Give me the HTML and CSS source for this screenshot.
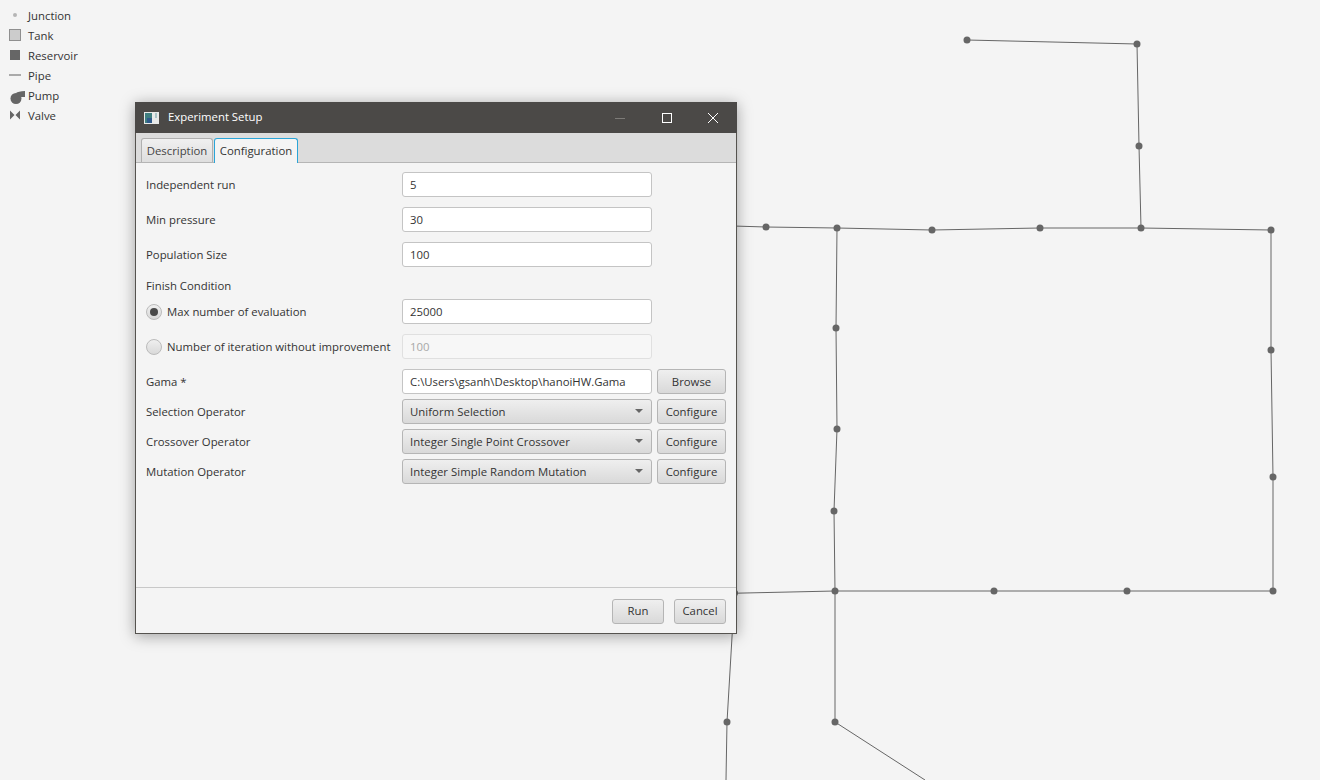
FILE: index.html
```html
<!DOCTYPE html>
<html lang="en">
<head>
    <meta charset="UTF-8">
    <title>Experiment Setup</title>
    <link rel="stylesheet" href="styles.css">
</head>
<body>
    <!-- Network canvas -->
    <svg class="network" width="1320" height="780" viewBox="0 0 1320 780">
        <g fill="none" stroke="#666" stroke-width="1">
            <polyline points="967,40 1137,44 1139,146 1141,228"/>
            <polyline points="700,225 766,227 837,228 932,230 1040,228 1141,228 1271,230 1271,350 1273,477 1273,591 1127,591 994,591 835,591 700,594"/>
            <polyline points="837,228 836,328 837,429 834,511 835,591 835,722 925,780"/>
            <polyline points="733,620 727,722 726,780"/>
        </g>
        <g fill="#666">
            <circle cx="967" cy="40" r="3.5"/>
            <circle cx="1137" cy="44" r="3.5"/>
            <circle cx="1139" cy="146" r="3.5"/>
            <circle cx="766" cy="227" r="3.5"/>
            <circle cx="837" cy="228" r="3.5"/>
            <circle cx="932" cy="230" r="3.5"/>
            <circle cx="1040" cy="228" r="3.5"/>
            <circle cx="1141" cy="228" r="3.5"/>
            <circle cx="1271" cy="230" r="3.5"/>
            <circle cx="836" cy="328" r="3.5"/>
            <circle cx="1271" cy="350" r="3.5"/>
            <circle cx="837" cy="429" r="3.5"/>
            <circle cx="1273" cy="477" r="3.5"/>
            <circle cx="834" cy="511" r="3.5"/>
            <circle cx="835" cy="591" r="3.5"/>
            <circle cx="994" cy="591" r="3.5"/>
            <circle cx="1127" cy="591" r="3.5"/>
            <circle cx="1273" cy="591" r="3.5"/>
            <circle cx="734.500" cy="593" r="3.5"/>
            <circle cx="727" cy="722" r="3.5"/>
            <circle cx="835" cy="722" r="3.5"/>
        </g>
    </svg>

    <!-- Legend -->
    <ul class="legend">
        <li><span class="legend-icon"><span class="icon-junction"></span></span>Junction</li>
        <li><span class="legend-icon"><span class="icon-tank"></span></span>Tank</li>
        <li><span class="legend-icon"><span class="icon-reservoir"></span></span>Reservoir</li>
        <li><span class="legend-icon"><span class="icon-pipe"></span></span>Pipe</li>
        <li>
            <span class="legend-icon">
                <svg class="icon-pump" width="16" height="16" viewBox="0 0 16 16"><circle cx="6" cy="9.500" r="5.500" fill="#666"/><path d="M6 4 Q8 2.500 15 2 V8 H9 Z" fill="#666"/></svg>
            </span>Pump
        </li>
        <li>
            <span class="legend-icon">
                <svg width="12" height="10" viewBox="0 0 12 10"><path d="M1 0.500 L5.500 5 L1 9.500 Z M11 0.500 L6.500 5 L11 9.500 Z" fill="#666"/></svg>
            </span>Valve
        </li>
    </ul>

    <!-- Dialog window -->
    <div class="window">
        <div class="titlebar">
            <svg class="app-icon" width="15" height="12" viewBox="0 0 15 12">
                <rect width="15" height="12" fill="#e8eaea"/>
                <rect x="1" y="1" width="7" height="10" fill="#3f7f80"/>
                <rect x="3" y="6" width="5" height="5" fill="#2f5a8c"/>
                <rect x="11" y="1" width="2" height="5" fill="#a9c4c8"/>
            </svg>
            <span class="window-title">Experiment Setup</span>
            <div class="window-controls">
                <svg width="46" height="30" viewBox="0 0 46 30"><line x1="17" y1="15.500" x2="27" y2="15.500" stroke="#7d7b78"/></svg>
                <svg width="46" height="30" viewBox="0 0 46 30"><rect x="18.500" y="10.500" width="9" height="9" fill="none" stroke="#fff"/></svg>
                <svg width="46" height="30" viewBox="0 0 46 30"><path d="M18 10 L28 20 M28 10 L18 20" stroke="#fff" fill="none"/></svg>
            </div>
        </div>

        <div class="tab-bar">
            <div class="tab">Description</div>
            <div class="tab tab-active">Configuration</div>
        </div>

        <div class="content">
            <form class="form">
                <div class="row">
                    <label>Independent run</label>
                    <input class="field" type="text" value="5">
                </div>
                <div class="row">
                    <label>Min pressure</label>
                    <input class="field" type="text" value="30">
                </div>
                <div class="row">
                    <label>Population Size</label>
                    <input class="field" type="text" value="100">
                </div>
                <div class="section-label">Finish Condition</div>
                <div class="row">
                    <label class="radio-label"><span class="radio radio-on"></span>Max number of evaluation</label>
                    <input class="field" type="text" value="25000">
                </div>
                <div class="row">
                    <label class="radio-label"><span class="radio"></span>Number of iteration without improvement</label>
                    <input class="field field-disabled" type="text" value="100" disabled>
                </div>
                <div class="row row-tight">
                    <label>Gama *</label>
                    <input class="field" type="text" value="C:\Users\gsanh\Desktop\hanoiHW.Gama">
                    <button class="btn" type="button">Browse</button>
                </div>
                <div class="row row-tight">
                    <label>Selection Operator</label>
                    <div class="combo">Uniform Selection<span class="arrow"></span></div>
                    <button class="btn" type="button">Configure</button>
                </div>
                <div class="row row-tight">
                    <label>Crossover Operator</label>
                    <div class="combo">Integer Single Point Crossover<span class="arrow"></span></div>
                    <button class="btn" type="button">Configure</button>
                </div>
                <div class="row row-tight">
                    <label>Mutation Operator</label>
                    <div class="combo">Integer Simple Random Mutation<span class="arrow"></span></div>
                    <button class="btn" type="button">Configure</button>
                </div>
            </form>
        </div>

        <div class="footer">
            <button class="btn btn-footer" type="button">Run</button>
            <button class="btn btn-footer" type="button">Cancel</button>
        </div>
    </div>
</body>
</html>
```

FILE: styles.css
```css
/* Global Styling */
body {
    margin: 0;
    width: 1320px;
    height: 780px;
    overflow: hidden;
    position: relative;
    background-color: #f4f4f4;
    color: #333;
    font-family: "Open Sans", "Noto Sans", sans-serif;
    font-size: 11.35px;
}

.network {
    position: absolute;
    left: 0;
    top: 0;
}

/* Legend */
.legend {
    list-style: none;
    margin: 0;
    padding: 5px 0 0 0;
    position: relative;
    width: 100px;
}

.legend li {
    display: flex;
    align-items: center;
    height: 20px;
}

.legend-icon {
    width: 28px;
    flex: none;
    display: flex;
    box-sizing: border-box;
    padding-left: 9px;
}

.icon-junction {
    width: 4px;
    height: 4px;
    border-radius: 50%;
    background-color: #b5b5b5;
    margin-left: 4px;
}

.icon-tank {
    width: 10px;
    height: 10px;
    background-color: #ccc;
    border: 1px solid #8f8f8f;
}

.icon-reservoir {
    width: 10px;
    height: 10px;
    margin-left: 1px;
    background-color: #666;
}

.icon-pipe {
    width: 12px;
    height: 2px;
    background-color: #aaa;
}

.icon-pump {
    margin-left: 1px;
    margin-top: 4px;
}

/* Window */
.window {
    position: absolute;
    left: 135px;
    top: 102px;
    width: 602px;
    height: 532px;
    box-sizing: border-box;
    display: flex;
    flex-direction: column;
    background-color: #f4f4f4;
    border: 1px solid #55534f;
    border-top: none;
    box-shadow: 0 2px 14px rgba(0, 0, 0, 0.35);
}

.titlebar {
    height: 31px;
    flex: none;
    display: flex;
    align-items: center;
    background-color: #4b4947;
    color: #fff;
    margin: 0 -1px;
}

.app-icon {
    margin-left: 9px;
}

.window-title {
    margin-left: 9px;
    margin-bottom: 2px;
}

.window-controls {
    margin-left: auto;
    display: flex;
    margin-right: 1px;
}

/* Tabs */
.tab-bar {
    height: 30px;
    flex: none;
    box-sizing: border-box;
    display: flex;
    align-items: flex-end;
    gap: 2px;
    padding-left: 5px;
    background-color: #dcdcdc;
    border-bottom: 1px solid #b5b5b5;
}

.tab {
    width: 72px;
    height: 24px;
    box-sizing: border-box;
    text-align: center;
    line-height: 23px;
    border: 1px solid #b0b0b0;
    border-bottom: none;
    border-radius: 3px 3px 0 0;
    background: linear-gradient(#f0f0f0, #dedede);
    color: #444;
}

.tab-active {
    width: 84px;
    height: 25px;
    margin-bottom: -1px;
    margin-left: -1px;
    background: #f4f4f4;
    border-color: #2aa5d8;
    color: #333;
}

/* Form */
.content {
    flex: 1;
    padding: 9px 10px 0 10px;
}

.row {
    display: grid;
    grid-template-columns: 251px 250px 69px;
    column-gap: 5px;
    align-items: center;
    height: 25px;
    margin-bottom: 10px;
}

.row-tight {
    margin-bottom: 5px;
}

.row label {
    white-space: nowrap;
}

.section-label {
    height: 17px;
    line-height: 17px;
    margin-bottom: 5px;
}

.radio-label {
    display: flex;
    align-items: center;
}

.radio {
    width: 16px;
    height: 16px;
    margin-right: 5px;
    flex: none;
    box-sizing: border-box;
    border: 1px solid #bbb;
    border-radius: 50%;
    background: linear-gradient(#efefef, #d9d9d9);
    position: relative;
}

.radio-on::after {
    content: "";
    position: absolute;
    left: 3px;
    top: 3px;
    width: 8px;
    height: 8px;
    border-radius: 50%;
    background-color: #4a4a4a;
}

.field {
    box-sizing: border-box;
    width: 250px;
    height: 25px;
    padding: 0 7px;
    font: inherit;
    color: #333;
    background-color: #fff;
    border: 1px solid #c4c4c4;
    border-radius: 3px;
}

.field-disabled {
    background-color: #f7f7f7;
    border-color: #e0e0e0;
    color: #a8a8a8;
}

.combo {
    box-sizing: border-box;
    height: 25px;
    padding: 0 7px;
    line-height: 23px;
    letter-spacing: 0.05px;
    border: 1px solid #b5b5b5;
    border-radius: 3px;
    background: linear-gradient(#efefef, #d9d9d9);
    position: relative;
}

.arrow {
    position: absolute;
    right: 8px;
    top: 9px;
    border-left: 4px solid transparent;
    border-right: 4px solid transparent;
    border-top: 4px solid #666;
}

.btn {
    box-sizing: border-box;
    height: 25px;
    padding: 0;
    font: inherit;
    color: #333;
    border: 1px solid #b5b5b5;
    border-radius: 3px;
    background: linear-gradient(#efefef, #d9d9d9);
}

/* Footer */
.footer {
    height: 46px;
    flex: none;
    display: flex;
    justify-content: flex-end;
    gap: 10px;
    padding: 11px 10px 0 0;
    box-sizing: border-box;
    border-top: 1px solid #c8c8c8;
}

.btn-footer {
    width: 52px;
    padding-bottom: 2px;
}
```
